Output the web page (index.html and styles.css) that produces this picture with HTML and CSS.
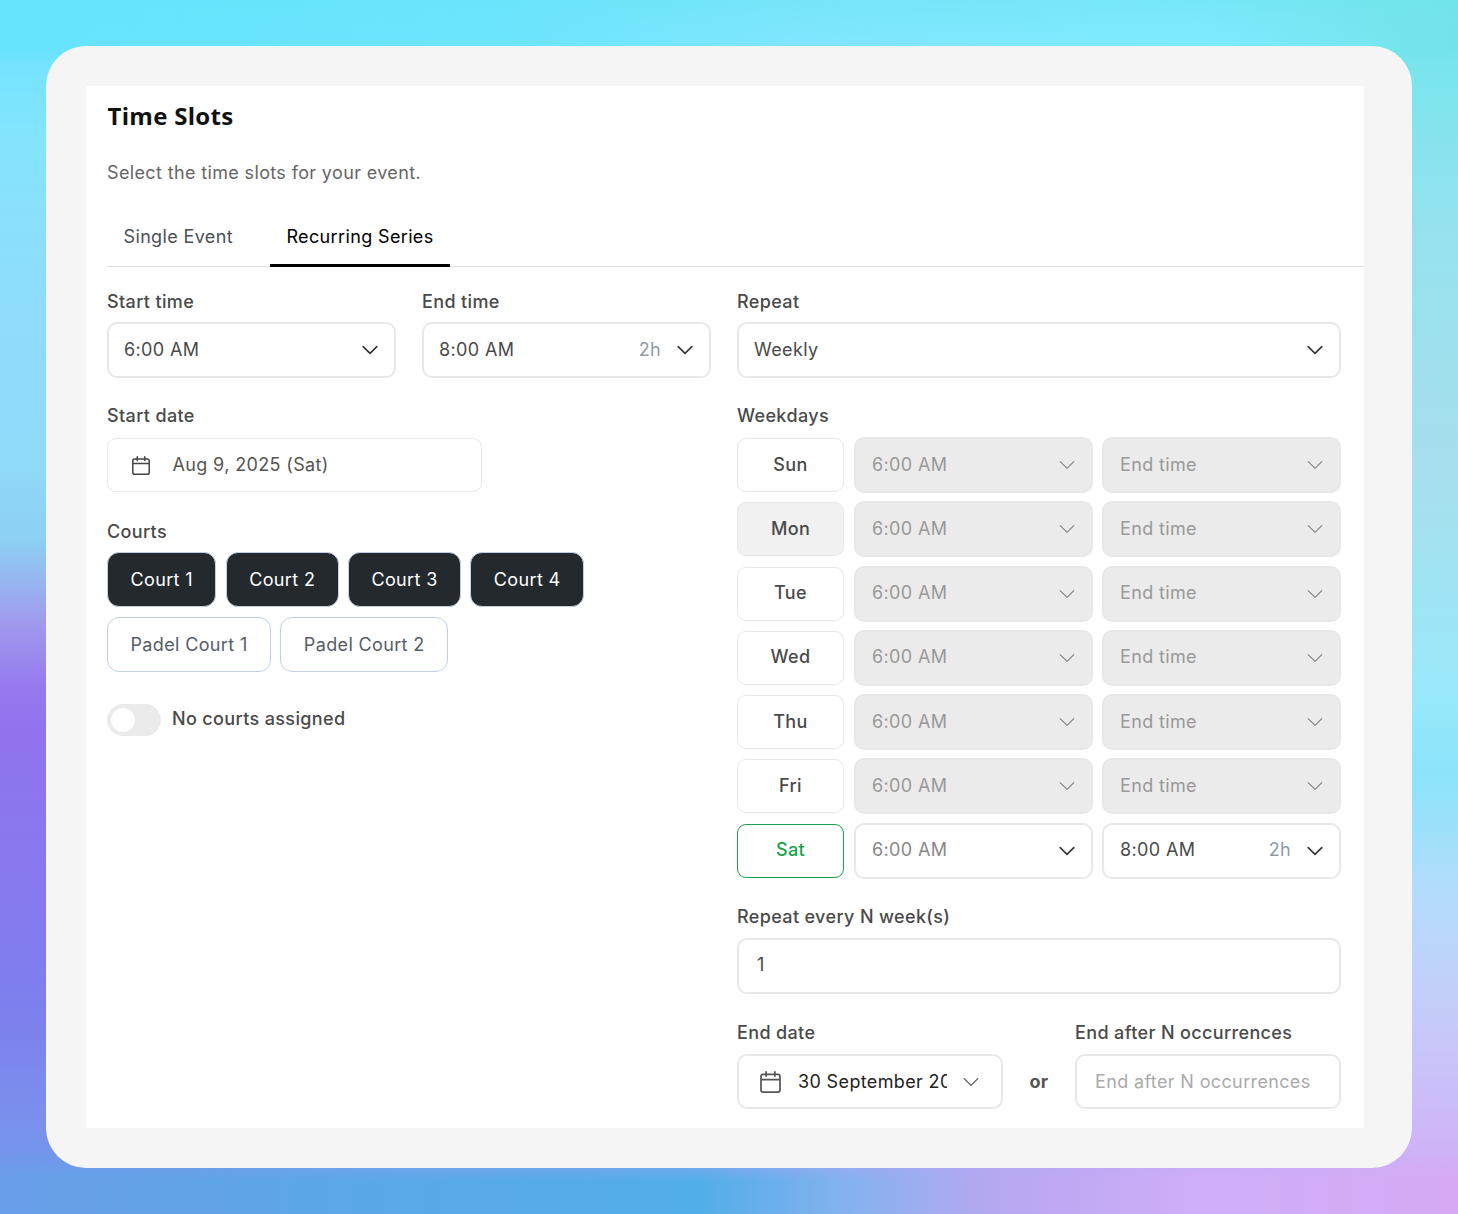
FILE: index.html
```html
<!DOCTYPE html>
<html lang="en">
<head>
<meta charset="utf-8">
<title>Time Slots</title>
<link rel="stylesheet" href="styles.css">
</head>
<body>
<div class="bg bg-right" aria-hidden="true"></div>
<div class="bg bg-top" aria-hidden="true"></div>
<div class="bg bg-bottom" aria-hidden="true"></div>
<svg class="sprite" width="0" height="0" aria-hidden="true">
  <symbol id="chev" viewBox="0 0 16 16"><path class="chev-path" d="M1.2 4.6 8 11.4 14.8 4.6"/></symbol>
  <symbol id="cal" viewBox="0 0 18 19"><path d="M2.6 2.9h12.8a1.8 1.8 0 0 1 1.8 1.8v11.7a1.8 1.8 0 0 1-1.8 1.8H2.6a1.8 1.8 0 0 1-1.8-1.8V4.700a1.800 1.800 0 0 1 1.800-1.800ZM.8 7.400h16.400M5.200.8v3.600M12.800.8v3.600" fill="none" stroke="currentColor" stroke-width="1.5" stroke-linecap="round" stroke-linejoin="round"/></symbol>
</svg>
<main class="card">
  <section class="panel">
    <h1 class="title">Time Slots</h1>
    <p class="subtitle">Select the time slots for your event.</p>
    <nav class="tabs">
      <span class="tab">Single Event</span>
      <span class="tab tab-active">Recurring Series</span>
    </nav>
    <div class="columns">
      <div class="col">
        <div class="time-pair">
          <div class="field">
            <label class="label">Start time</label>
            <div class="select top"><span class="value">6:00 AM</span><svg class="chev"><use href="#chev"/></svg></div>
          </div>
          <div class="field">
            <label class="label">End time</label>
            <div class="select top"><span class="value">8:00 AM</span><span class="dur">2h</span><svg class="chev"><use href="#chev"/></svg></div>
          </div>
        </div>
        <div class="field field-date">
          <label class="label">Start date</label>
          <div class="date-input"><svg class="cal-sm"><use href="#cal"/></svg><span>Aug 9, 2025 (Sat)</span></div>
        </div>
        <div class="field field-courts">
          <label class="label">Courts</label>
          <div class="courts">
            <button class="court on">Court 1</button>
            <button class="court on">Court 2</button>
            <button class="court on">Court 3</button>
            <button class="court on">Court 4</button>
            <button class="court">Padel Court 1</button>
            <button class="court">Padel Court 2</button>
          </div>
        </div>
        <div class="toggle-row">
          <span class="toggle"><span class="knob"></span></span>
          <span class="toggle-label">No courts assigned</span>
        </div>
      </div>
      <div class="col">
        <div class="field">
          <label class="label">Repeat</label>
          <div class="select top"><span class="value">Weekly</span><svg class="chev"><use href="#chev"/></svg></div>
        </div>
        <div class="field field-week">
          <label class="label">Weekdays</label>
          <div class="days">
            <button class="day">Sun</button>
            <div class="select off"><span class="value">6:00 AM</span><svg class="chev"><use href="#chev"/></svg></div>
            <div class="select off"><span class="value">End time</span><svg class="chev"><use href="#chev"/></svg></div>
            <button class="day day-hover">Mon</button>
            <div class="select off"><span class="value">6:00 AM</span><svg class="chev"><use href="#chev"/></svg></div>
            <div class="select off"><span class="value">End time</span><svg class="chev"><use href="#chev"/></svg></div>
            <button class="day">Tue</button>
            <div class="select off"><span class="value">6:00 AM</span><svg class="chev"><use href="#chev"/></svg></div>
            <div class="select off"><span class="value">End time</span><svg class="chev"><use href="#chev"/></svg></div>
            <button class="day">Wed</button>
            <div class="select off"><span class="value">6:00 AM</span><svg class="chev"><use href="#chev"/></svg></div>
            <div class="select off"><span class="value">End time</span><svg class="chev"><use href="#chev"/></svg></div>
            <button class="day">Thu</button>
            <div class="select off"><span class="value">6:00 AM</span><svg class="chev"><use href="#chev"/></svg></div>
            <div class="select off"><span class="value">End time</span><svg class="chev"><use href="#chev"/></svg></div>
            <button class="day">Fri</button>
            <div class="select off"><span class="value">6:00 AM</span><svg class="chev"><use href="#chev"/></svg></div>
            <div class="select off"><span class="value">End time</span><svg class="chev"><use href="#chev"/></svg></div>
            <button class="day day-on">Sat</button>
            <div class="select"><span class="value muted">6:00 AM</span><svg class="chev"><use href="#chev"/></svg></div>
            <div class="select"><span class="value">8:00 AM</span><span class="dur">2h</span><svg class="chev"><use href="#chev"/></svg></div>
          </div>
        </div>
        <div class="field field-repeat">
          <label class="label">Repeat every N week(s)</label>
          <div class="select num"><span class="value">1</span></div>
        </div>
        <div class="end-row">
          <div class="field">
            <label class="label">End date</label>
            <div class="select end-date"><svg class="cal-lg"><use href="#cal"/></svg><span class="clip">30 September 2025</span><svg class="chev thin"><use href="#chev"/></svg></div>
          </div>
          <span class="or">or</span>
          <div class="field">
            <label class="label">End after N occurrences</label>
            <div class="select occ"><span class="value placeholder">End after N occurrences</span></div>
          </div>
        </div>
      </div>
    </div>
  </section>
</main>
</body>
</html>
```

FILE: styles.css
```css
* { box-sizing: border-box; }
html, body { height: 100%; }
body {
  position: relative;
  margin: 0;
  height: 1214px;
  overflow: hidden;
  padding: 46px;
  font-family: Inter, "Liberation Sans", sans-serif;
  letter-spacing: 0.36px;
  color: #495057;
  background: linear-gradient(180deg,
    #66e3fe 0, #83e4fe 130px, #90dcfd 310px, #8fd9f9 470px, #8dd0f4 540px,
    #a09cee 620px, #9678ef 690px, #9173ef 735px, #7e7fee 1007px, #7a90ec 1120px, #6a9dea 1214px);
}
.bg { position: absolute; inset: 0; }
.bg-right {
  background: linear-gradient(180deg,
    #6ee5ec 0, #96e2ef 232px, #a8dfec 465px, #98e8fa 697px, #8ce4fb 775px,
    #b2dcfb 890px, #c5cdfa 1007px, #d3a8f6 1214px);
  -webkit-mask-image: linear-gradient(90deg, transparent 0, transparent 46px, #000 1412px);
  mask-image: linear-gradient(90deg, transparent 0, transparent 46px, #000 1412px);
}
.bg-top {
  background: linear-gradient(90deg, #66e3fe 0, #6be5fe 500px, #80e6ff 800px, #7eebff 1200px, #72e3e8 1458px);
  -webkit-mask-image: linear-gradient(180deg, rgba(0,0,0,.5) 0, #000 46px, transparent 60px);
  mask-image: linear-gradient(180deg, rgba(0,0,0,.5) 0, #000 46px, transparent 60px);
}
.bg-bottom {
  background: linear-gradient(90deg, #6a9eea 0, #5da7e8 300px, #52aee8 700px, #85b2ef 850px, #b8a7f2 1000px, #cfaef7 1200px, #d5a9f5 1458px);
  -webkit-mask-image: linear-gradient(180deg, transparent 1150px, #000 1180px);
  mask-image: linear-gradient(180deg, transparent 1150px, #000 1180px);
}
.sprite { position: absolute; }
.card {
  position: relative;
  z-index: 1;
  width: 1366px;
  height: 1122px;
  padding: 40px 48px 40px 40px;
  background: #f5f5f5;
  border-radius: 40px;
}
.panel {
  height: 1042px;
  padding-left: 21px;
  background: #fff;
}
.title {
  margin: 0;
  padding: 13px 0 0 0.500px;
  font-family: "Open Sans", Inter, sans-serif;
  font-size: 24px;
  line-height: 34px;
  font-weight: 700;
  letter-spacing: 0.3px;
  color: #111;
}
.subtitle {
  margin: 26px 0 0;
  font-size: 18px;
  line-height: 28px;
  color: #666;
}
.tabs {
  display: flex;
  margin-top: 25px;
  height: 55px;
  border-bottom: 1px solid #e0e0e0;
}
.tab {
  padding: 11px 16.500px 0;
  height: 55px;
  font-size: 18px;
  line-height: 28px;
  color: #495057;
  margin-right: 20.500px;
}
.tab-active {
  color: #000;
  border-bottom: 3px solid #000;
  margin-right: 0;
}
.columns {
  display: grid;
  grid-template-columns: 604px 604px;
  gap: 26px;
  padding-top: 21px;
}
.col { min-width: 0; }
.field { display: flex; flex-direction: column; min-width: 0; }
.label {
  font-size: 18px;
  line-height: 28px;
  font-weight: 450;
  color: #4a4a4a;
  margin-bottom: 6px;
}
.time-pair {
  display: grid;
  grid-template-columns: 289px 289px;
  gap: 26px;
}
.select {
  display: flex;
  align-items: center;
  height: 56px;
  padding: 0 16px 2px;
  border: 2px solid #e8e8e8;
  border-radius: 10px;
  background: #fff;
  font-size: 18px;
  color: #4a4a4a;
}
.top { padding-left: 15px; }
.value { flex: 1; white-space: nowrap; }
.muted { color: #888; }
.dur { color: #919aa8; margin-right: 16px; }
.chev { width: 16px; height: 16px; color: #333; flex: none; margin-top: 2px; }
.chev-path {
  fill: none;
  stroke: currentColor;
  stroke-width: var(--chev-weight, 1.6);
  stroke-linecap: round;
  stroke-linejoin: round;
}
.chev.thin { color: #555; --chev-weight: 1.2; }
.off { background: #ebebeb; color: #999; }
.off .chev { color: #888; --chev-weight: 1.2; }
.field-date { margin-top: 24px; }
.field-date .label { margin-bottom: 8px; }
.date-input {
  display: flex;
  align-items: center;
  gap: 23px;
  width: 375px;
  height: 54px;
  padding: 0 0 2px 23.500px;
  border: 1px solid #e8e8ee;
  border-radius: 9px;
  font-size: 18px;
  color: #555;
}
.cal-sm { width: 18px; height: 19px; color: #444; flex: none; margin-top: 2px; }
.field-courts { margin-top: 26px; }
.field-courts .label { margin-bottom: 6px; }
.courts { display: flex; flex-wrap: wrap; gap: 10px 9.200px; width: 520px; }
.court {
  height: 55px;
  padding: 0 22.500px 1px;
  border: 1px solid #c2d0e6;
  border-radius: 12px;
  background: #fff;
  font: inherit;
  font-size: 18px;
  letter-spacing: 0.36px;
  color: #555d68;
}
.court.on { background: #24292e; color: #fff; }
.toggle-row { display: flex; align-items: flex-start; gap: 11px; margin-top: 32px; }
.toggle {
  display: block;
  width: 54px;
  height: 32px;
  padding: 4px;
  border-radius: 16px;
  background: #ebebeb;
}
.knob { display: block; width: 24px; height: 24px; border-radius: 50%; background: #fff; }
.toggle-label { padding-top: 1px; font-size: 18px; line-height: 28px; font-weight: 450; color: #4a4a4a; }
.field-week { margin-top: 24px; }
.field-week .label { margin-bottom: 7px; }
.days {
  display: grid;
  grid-template-columns: 107.500px 238.500px 239px;
  grid-auto-rows: 56px;
  gap: 8.250px 9.500px;
  align-items: center;
}
.day {
  width: 107px;
  height: 54px;
  padding: 0 0 2px;
  border: 1px solid #e8e8e8;
  border-radius: 9px;
  background: #fff;
  font: inherit;
  font-size: 18px;
  font-weight: 450;
  letter-spacing: 0.36px;
  color: #4a4a4a;
}
.day-hover { background: #f1f1f1; }
.day-on { border-color: #16a34a; color: #16a34a; }
.field-repeat { margin-top: 24px; }
.field-repeat .label { margin-bottom: 7px; }
.num { padding-left: 18px; }
.end-row {
  display: grid;
  grid-template-columns: 266px 1fr 266px;
  margin-top: 25px;
  align-items: end;
}
.end-row .label { margin-bottom: 7px; }
.or { align-self: end; height: 55px; line-height: 55px; text-align: center; font-size: 18px; font-weight: 700; color: #555; }
.end-date { height: 55px; color: #222; padding: 0 22px 0 21px; }
.cal-lg { width: 21px; height: 22px; color: #555; flex: none; margin: 2px 17px 0 0; }
.clip { flex: 1; overflow: hidden; white-space: nowrap; margin-right: 16px; }
.occ { height: 55px; padding: 0 0 0 18px; }
.placeholder { color: #aaa; }
```
